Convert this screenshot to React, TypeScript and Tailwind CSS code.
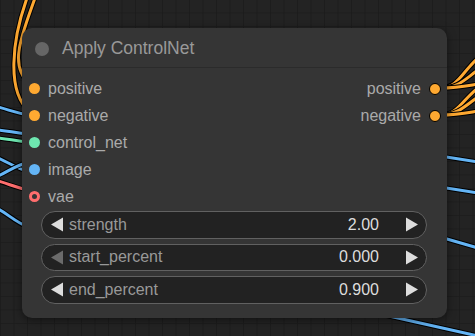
import React from "react";

type Slot = { name: string; color: string; hollow?: boolean };

const inputs: Slot[] = [
  { name: "positive", color: "#FFA931" },
  { name: "negative", color: "#FFA931" },
  { name: "control_net", color: "#6EE7B0" },
  { name: "image", color: "#64B5F6" },
  { name: "vae", color: "#FF6E6E", hollow: true },
];

const outputs = ["positive", "negative"];

const widgets = [
  { name: "strength", value: "2.00", atMin: false },
  { name: "start_percent", value: "0.000", atMin: true },
  { name: "end_percent", value: "0.900", atMin: false },
];

function Wire({ d, color }: { d: string; color: string }) {
  return (
    <g fill="none" strokeLinecap="round">
      <path d={d} stroke="#000" strokeWidth={5} />
      <path d={d} stroke={color} strokeWidth={3} />
    </g>
  );
}

function Canvas() {
  return (
    <svg className="absolute inset-0" width={475} height={336}>
      <defs>
        <pattern id="grid" width="13.5" height="13.5" patternUnits="userSpaceOnUse" x="0" y="-1">
          <path d="M 0 0 H 13.5 M 0 0 V 13.5" stroke="#1b1b1b" strokeWidth={1.5} />
        </pattern>
      </defs>
      <rect width="475" height="336" fill="#232323" />
      <rect width="475" height="336" fill="url(#grid)" />

      {/* left side */}
      <Wire d="M 35 -2 C 22 35, 8 66, 30 84" color="#FFA931" />
      <Wire d="M 27 -2 C 12 40, 6 92, 30 112" color="#FFA931" />
      <Wire d="M -2 107 C 10 110, 15 113, 30 115" color="#64B5F6" />
      <Wire d="M -2 130 C 10 131, 15 133, 30 134" color="#64B5F6" />
      <Wire d="M -2 138 C 10 139, 15 141, 30 142" color="#6EE7B0" />
      <Wire d="M -2 158 C 8 162, 15 168, 30 172" color="#64B5F6" />
      <Wire d="M -2 176 C 8 172, 15 165, 30 162" color="#64B5F6" />
      <Wire d="M -2 181 C 10 184, 15 188, 30 190" color="#FF6E6E" />
      <Wire d="M -2 209 C 8 214, 15 222, 30 228" color="#64B5F6" />

      {/* right side */}
      <Wire d="M 440 88 C 458 88, 462 72, 478 58" color="#FFA931" />
      <Wire d="M 440 88 C 458 88, 464 80, 478 70" color="#FFA931" />
      <Wire d="M 440 88 C 458 88, 466 86, 478 84" color="#FFA931" />
      <Wire d="M 440 115 C 458 115, 462 100, 478 88" color="#FFA931" />
      <Wire d="M 440 115 C 458 115, 466 105, 478 97" color="#FFA931" />
      <Wire d="M 440 115 C 458 115, 466 113, 478 111" color="#FFA931" />
      <Wire d="M 440 156 L 478 162" color="#64B5F6" />
      <Wire d="M 440 187 L 478 193" color="#64B5F6" />
      <Wire d="M 440 237 L 478 248" color="#64B5F6" />
      <Wire d="M 380 314 L 478 336" color="#64B5F6" />
    </svg>
  );
}

function Arrow({ dir, dim }: { dir: "left" | "right"; dim?: boolean }) {
  return (
    <svg width={14} height={15} viewBox="0 0 14 15">
      <path
        d={dir === "left" ? "M 13 0.5 L 13 14.5 L 1 7.5 Z" : "M 1 0.5 L 1 14.5 L 13 7.5 Z"}
        fill={dim ? "#6b6b6b" : "#dddddd"}
      />
    </svg>
  );
}

function Node() {
  return (
    <div className="absolute left-[22px] top-[28px] w-[425px] h-[290px] rounded-[10px] bg-[#353535] shadow-[0_2px_8px_rgba(0,0,0,0.5)] flex flex-col">
      <div className="h-[40px] flex items-center border-b border-[#2b2b2b] pl-[13px] pt-[2px] shrink-0">
        <div className="w-[14px] h-[14px] rounded-full bg-[#666666]" />
        <div className="ml-[13px] text-[17.5px] text-[#999999] leading-none">Apply ControlNet</div>
      </div>
      <div className="pt-[7px] flex flex-col">
        {inputs.map((s, i) => (
          <div key={s.name} className="h-[27px] flex items-center justify-between">
            <div className="flex items-center pl-[7px]">
              {s.hollow ? (
                <div
                  className="w-[11px] h-[11px] rounded-full border-[3px] bg-[#353535]"
                  style={{ borderColor: s.color }}
                />
              ) : (
                <div className="w-[11px] h-[11px] rounded-full" style={{ backgroundColor: s.color }} />
              )}
              <span className="ml-[8px] text-[16px] text-[#aaaaaa]">{s.name}</span>
            </div>
            {outputs[i] && (
              <div className="flex items-center pr-[6px]">
                <span className="mr-[8px] text-[16px] text-[#aaaaaa]">{outputs[i]}</span>
                <div className="w-[12px] h-[12px] rounded-full bg-[#FFA931] border border-black" />
              </div>
            )}
          </div>
        ))}
      </div>
      <div className="mt-[1px] flex flex-col gap-[5px] pl-[19px] pr-[20px]">
        {widgets.map((w) => (
          <div
            key={w.name}
            className="h-[27.5px] rounded-full border border-[#616161] bg-[#222222] flex items-center pl-[8px] pr-[7px]"
          >
            <Arrow dir="left" dim={w.atMin} />
            <span className="ml-[5px] text-[16px] text-[#999999]">{w.name}</span>
            <span className="ml-auto text-[16px] text-[#dddddd]">{w.value}</span>
            <span className="ml-[26px] flex">
              <Arrow dir="right" />
            </span>
          </div>
        ))}
      </div>
    </div>
  );
}

export default function App() {
  return (
    <div className="relative w-[475px] h-[336px] overflow-hidden font-['Liberation_Sans',Arial,sans-serif]">
      <Canvas />
      <Node />
    </div>
  );
}
